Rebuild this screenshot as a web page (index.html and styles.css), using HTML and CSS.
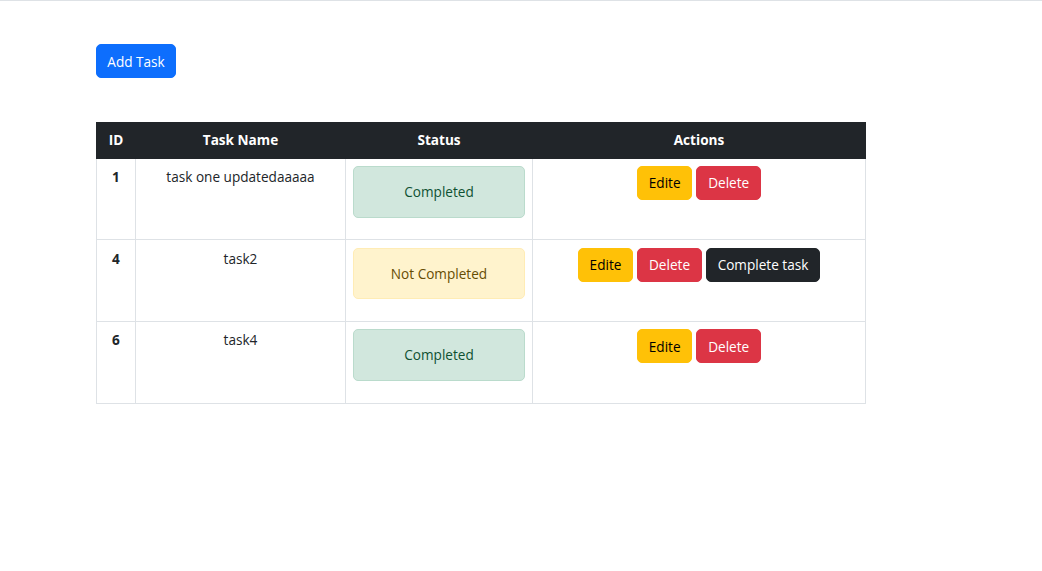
FILE: index.html
```html
<!DOCTYPE html>
<html lang="en">
<head>
<meta charset="utf-8">
<title>Tasks</title>
<link rel="stylesheet" href="styles.css">
</head>
<body>
<div class="page">
  <div class="toolbar">
    <button class="btn btn-primary btn-add">Add Task</button>
  </div>
  <table class="tasks">
    <colgroup>
      <col class="c-id"><col class="c-name"><col class="c-status"><col class="c-actions">
    </colgroup>
    <thead>
      <tr><th>ID</th><th>Task Name</th><th>Status</th><th>Actions</th></tr>
    </thead>
    <tbody>
      <tr>
        <td class="id">1</td>
        <td>task one updatedaaaaa</td>
        <td><div class="alert alert-success">Completed</div></td>
        <td><div class="actions"><button class="btn btn-warning">Edite</button><button class="btn btn-danger">Delete</button></div></td>
      </tr>
      <tr>
        <td class="id">4</td>
        <td>task2</td>
        <td><div class="alert alert-warning">Not Completed</div></td>
        <td><div class="actions"><button class="btn btn-warning">Edite</button><button class="btn btn-danger">Delete</button><button class="btn btn-dark">Complete task</button></div></td>
      </tr>
      <tr>
        <td class="id">6</td>
        <td>task4</td>
        <td><div class="alert alert-success">Completed</div></td>
        <td><div class="actions"><button class="btn btn-warning">Edite</button><button class="btn btn-danger">Delete</button></div></td>
      </tr>
    </tbody>
  </table>
</div>
</body>
</html>
```
FILE: styles.css
```css
* { box-sizing: border-box; }
html, body { margin: 0; padding: 0; background: #fff; }
body {
  font-family: "Open Sans", "Noto Sans", sans-serif;
  font-size: 13.6px;
  line-height: 21.6px;
  color: #212529;
  border-top: 1px solid #dee2e6;
}
.page { padding: 43px 0 0 96px; }
.toolbar { margin-bottom: 44px; display: flex; }
.btn {
  font-family: inherit;
  font-size: 13.6px;
  line-height: 21.6px;
  padding: 5.2px 10.8px;
  border: 1px solid transparent;
  border-radius: 5px;
  cursor: pointer;
}
.btn-add { width: 80px; padding: 6px 0 4.4px; text-align: center; }
.btn-primary { background: #0d6efd; border-color: #0d6efd; color: #fff; }
.btn-warning { background: #ffc107; border-color: #ffc107; color: #000; }
.btn-danger { background: #dc3545; border-color: #dc3545; color: #fff; }
.btn-dark { background: #212529; border-color: #212529; color: #fff; }
.tasks {
  border-collapse: collapse;
  table-layout: fixed;
  width: 769px;
  border: 1px solid #dee2e6;
}
.c-id { width: 39px; }
.c-name { width: 210px; }
.c-status { width: 187px; }
.c-actions { width: 333px; }
.tasks th {
  background: #212529;
  color: #fff;
  font-weight: 700;
  text-align: center;
  padding: 6.5px 7.2px 6.5px;
  height: 35px;
  border: 1px solid #212529;
}
.tasks td {
  border: 1px solid #dee2e6;
  padding: 7.4px 7.2px 7.2px;
  text-align: center;
  vertical-align: top;
}
.tasks td.id { font-weight: 700; }
.alert {
  padding: 14px;
  margin-bottom: 14.5px;
  border: 1px solid transparent;
  border-radius: 5px;
  text-align: center;
}
.alert-success { background: #d1e7dd; border-color: #badbcc; color: #0f5132; }
.alert-warning { background: #fff3cd; border-color: #ffecb5; color: #664d03; }
.actions { display: flex; justify-content: center; gap: 4px; }
```
